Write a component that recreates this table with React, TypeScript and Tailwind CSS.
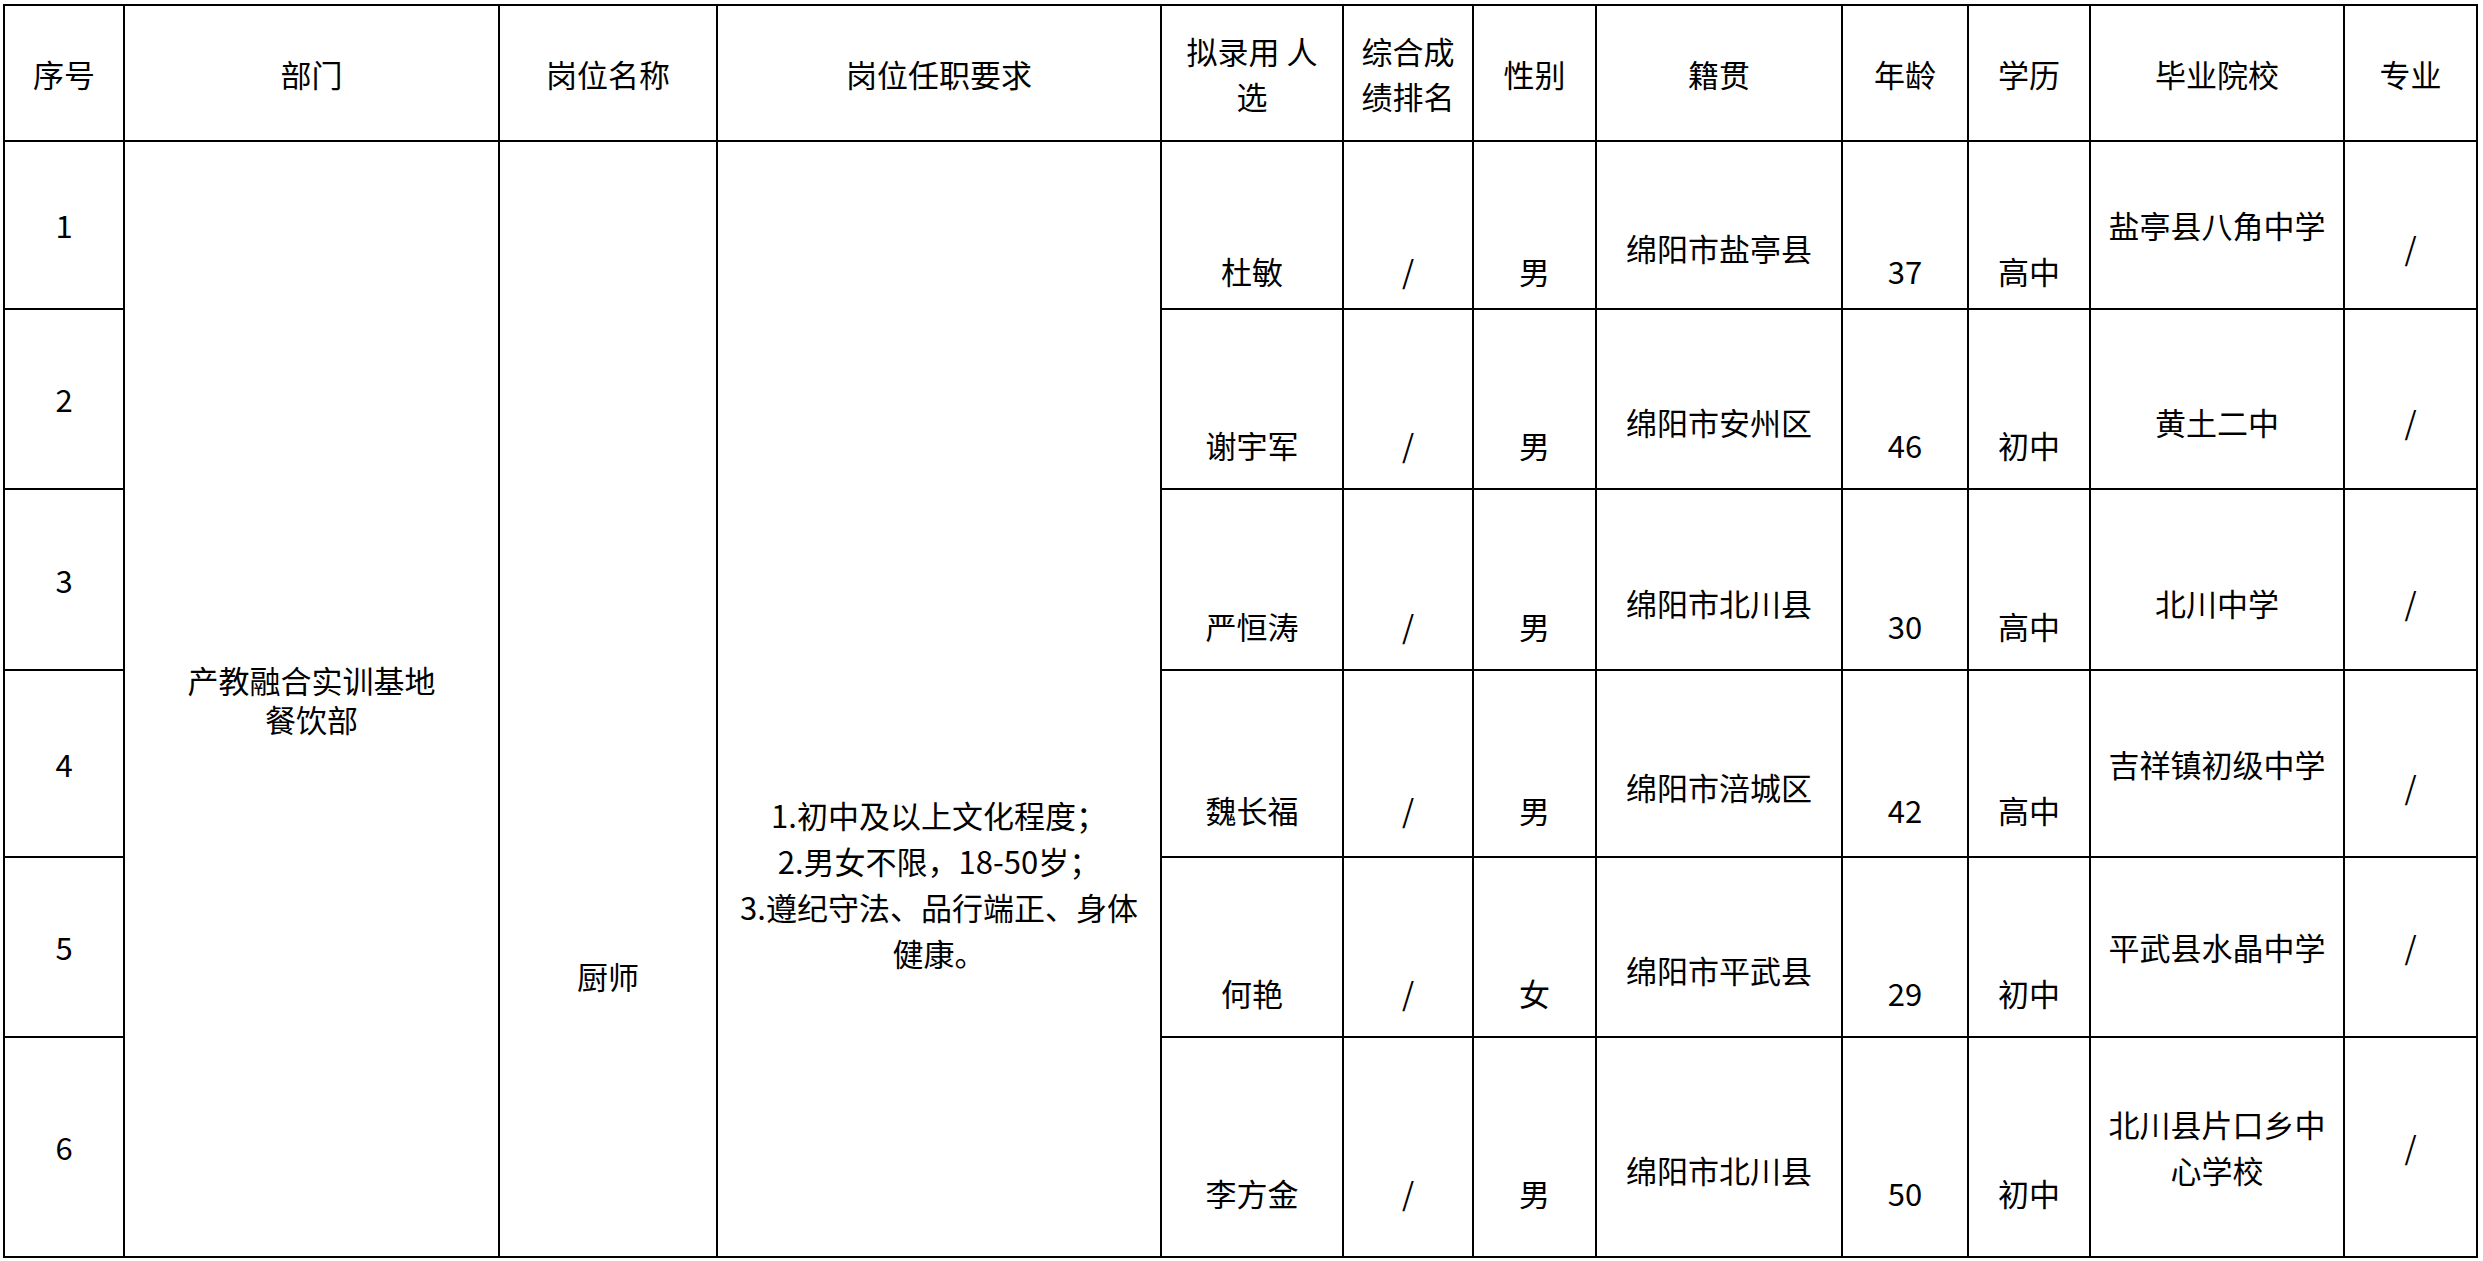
import React from "react";

type Pos = "mid" | "low" | "bottom";

interface Candidate {
  no: number;
  name: string;
  score: string;
  sex: string;
  origin: string;
  age: number;
  edu: string;
  school: string[];
  major: string;
  schoolPos: Pos;
  majorPos: Pos;
  rowClass: string;
}

// shift the text down inside the cell, the source sheet is not evenly centred
const shift: Record<Pos, string> = {
  mid: "",
  low: "pt-[46px]",
  bottom: "pt-[92px]",
};

const candidates: Candidate[] = [
  { no: 1, name: "杜敏", score: "/", sex: "男", origin: "绵阳市盐亭县", age: 37, edu: "高中", school: ["盐亭县八角中学"], major: "/", schoolPos: "mid", majorPos: "low", rowClass: "h-[168px]" },
  { no: 2, name: "谢宇军", score: "/", sex: "男", origin: "绵阳市安州区", age: 46, edu: "初中", school: ["黄土二中"], major: "/", schoolPos: "low", majorPos: "low", rowClass: "h-[180px]" },
  { no: 3, name: "严恒涛", score: "/", sex: "男", origin: "绵阳市北川县", age: 30, edu: "高中", school: ["北川中学"], major: "/", schoolPos: "low", majorPos: "low", rowClass: "h-[181px]" },
  { no: 4, name: "魏长福", score: "/", sex: "男", origin: "绵阳市涪城区", age: 42, edu: "高中", school: ["吉祥镇初级中学"], major: "/", schoolPos: "mid", majorPos: "low", rowClass: "h-[187px]" },
  { no: 5, name: "何艳", score: "/", sex: "女", origin: "绵阳市平武县", age: 29, edu: "初中", school: ["平武县水晶中学"], major: "/", schoolPos: "mid", majorPos: "mid", rowClass: "h-[180px]" },
  { no: 6, name: "李方金", score: "/", sex: "男", origin: "绵阳市北川县", age: 50, edu: "初中", school: ["北川县片口乡中", "心学校"], major: "/", schoolPos: "mid", majorPos: "mid", rowClass: "h-[220px]" },
];

const cell = "border-2 border-black text-center align-middle p-0";

function Lines({ lines }: { lines: string[] }) {
  return (
    <>
      {lines.map((line, i) => (
        <div key={i}>{line}</div>
      ))}
    </>
  );
}

export default function App() {
  return (
    <div className="min-h-screen bg-white pl-[3px] pt-[4px] text-black [font-family:'Noto_Sans_CJK_SC','Noto_Sans',sans-serif]">
      <table className="w-[2473px] table-fixed border-collapse text-[31px] leading-[46px]">
        <colgroup>
          <col className="w-[120px]" />
          <col className="w-[375px]" />
          <col className="w-[218px]" />
          <col className="w-[444px]" />
          <col className="w-[182px]" />
          <col className="w-[130px]" />
          <col className="w-[123px]" />
          <col className="w-[246px]" />
          <col className="w-[126px]" />
          <col className="w-[122px]" />
          <col className="w-[254px]" />
          <col className="w-[133px]" />
        </colgroup>
        <thead>
          <tr className="h-[136px] leading-[45px]">
            <th className={`${cell} font-normal`}>序号</th>
            <th className={`${cell} font-normal`}>部门</th>
            <th className={`${cell} font-normal`}>岗位名称</th>
            <th className={`${cell} font-normal`}>岗位任职要求</th>
            <th className={`${cell} font-normal`}>
              <Lines lines={["拟录用 人", "选"]} />
            </th>
            <th className={`${cell} font-normal`}>
              <Lines lines={["综合成", "绩排名"]} />
            </th>
            <th className={`${cell} font-normal`}>性别</th>
            <th className={`${cell} font-normal`}>籍贯</th>
            <th className={`${cell} font-normal`}>年龄</th>
            <th className={`${cell} font-normal`}>学历</th>
            <th className={`${cell} font-normal`}>毕业院校</th>
            <th className={`${cell} font-normal`}>专业</th>
          </tr>
        </thead>
        <tbody>
          {candidates.map((c, index) => (
            <tr key={c.no} className={c.rowClass}>
              <td className={cell}>{c.no}</td>
              {index === 0 && (
                <>
                  <td rowSpan={6} className={`${cell} leading-[39px]`}>
                    <Lines lines={["产教融合实训基地", "餐饮部"]} />
                  </td>
                  <td rowSpan={6} className={`${cell} pt-[554px]`}>
                    厨师
                  </td>
                  <td rowSpan={6} className={`${cell} pt-[369px]`}>
                    <Lines
                      lines={[
                        "1.初中及以上文化程度；",
                        "2.男女不限，18-50岁；",
                        "3.遵纪守法、品行端正、身体",
                        "健康。",
                      ]}
                    />
                  </td>
                </>
              )}
              <td className={`${cell} ${shift.bottom}`}>{c.name}</td>
              <td className={`${cell} ${shift.bottom}`}>{c.score}</td>
              <td className={`${cell} ${shift.bottom}`}>{c.sex}</td>
              <td className={`${cell} ${shift.low}`}>{c.origin}</td>
              <td className={`${cell} ${shift.bottom}`}>{c.age}</td>
              <td className={`${cell} ${shift.bottom}`}>{c.edu}</td>
              <td className={`${cell} ${shift[c.schoolPos]}`}>
                <Lines lines={c.school} />
              </td>
              <td className={`${cell} ${shift[c.majorPos]}`}>{c.major}</td>
            </tr>
          ))}
        </tbody>
      </table>
    </div>
  );
}
